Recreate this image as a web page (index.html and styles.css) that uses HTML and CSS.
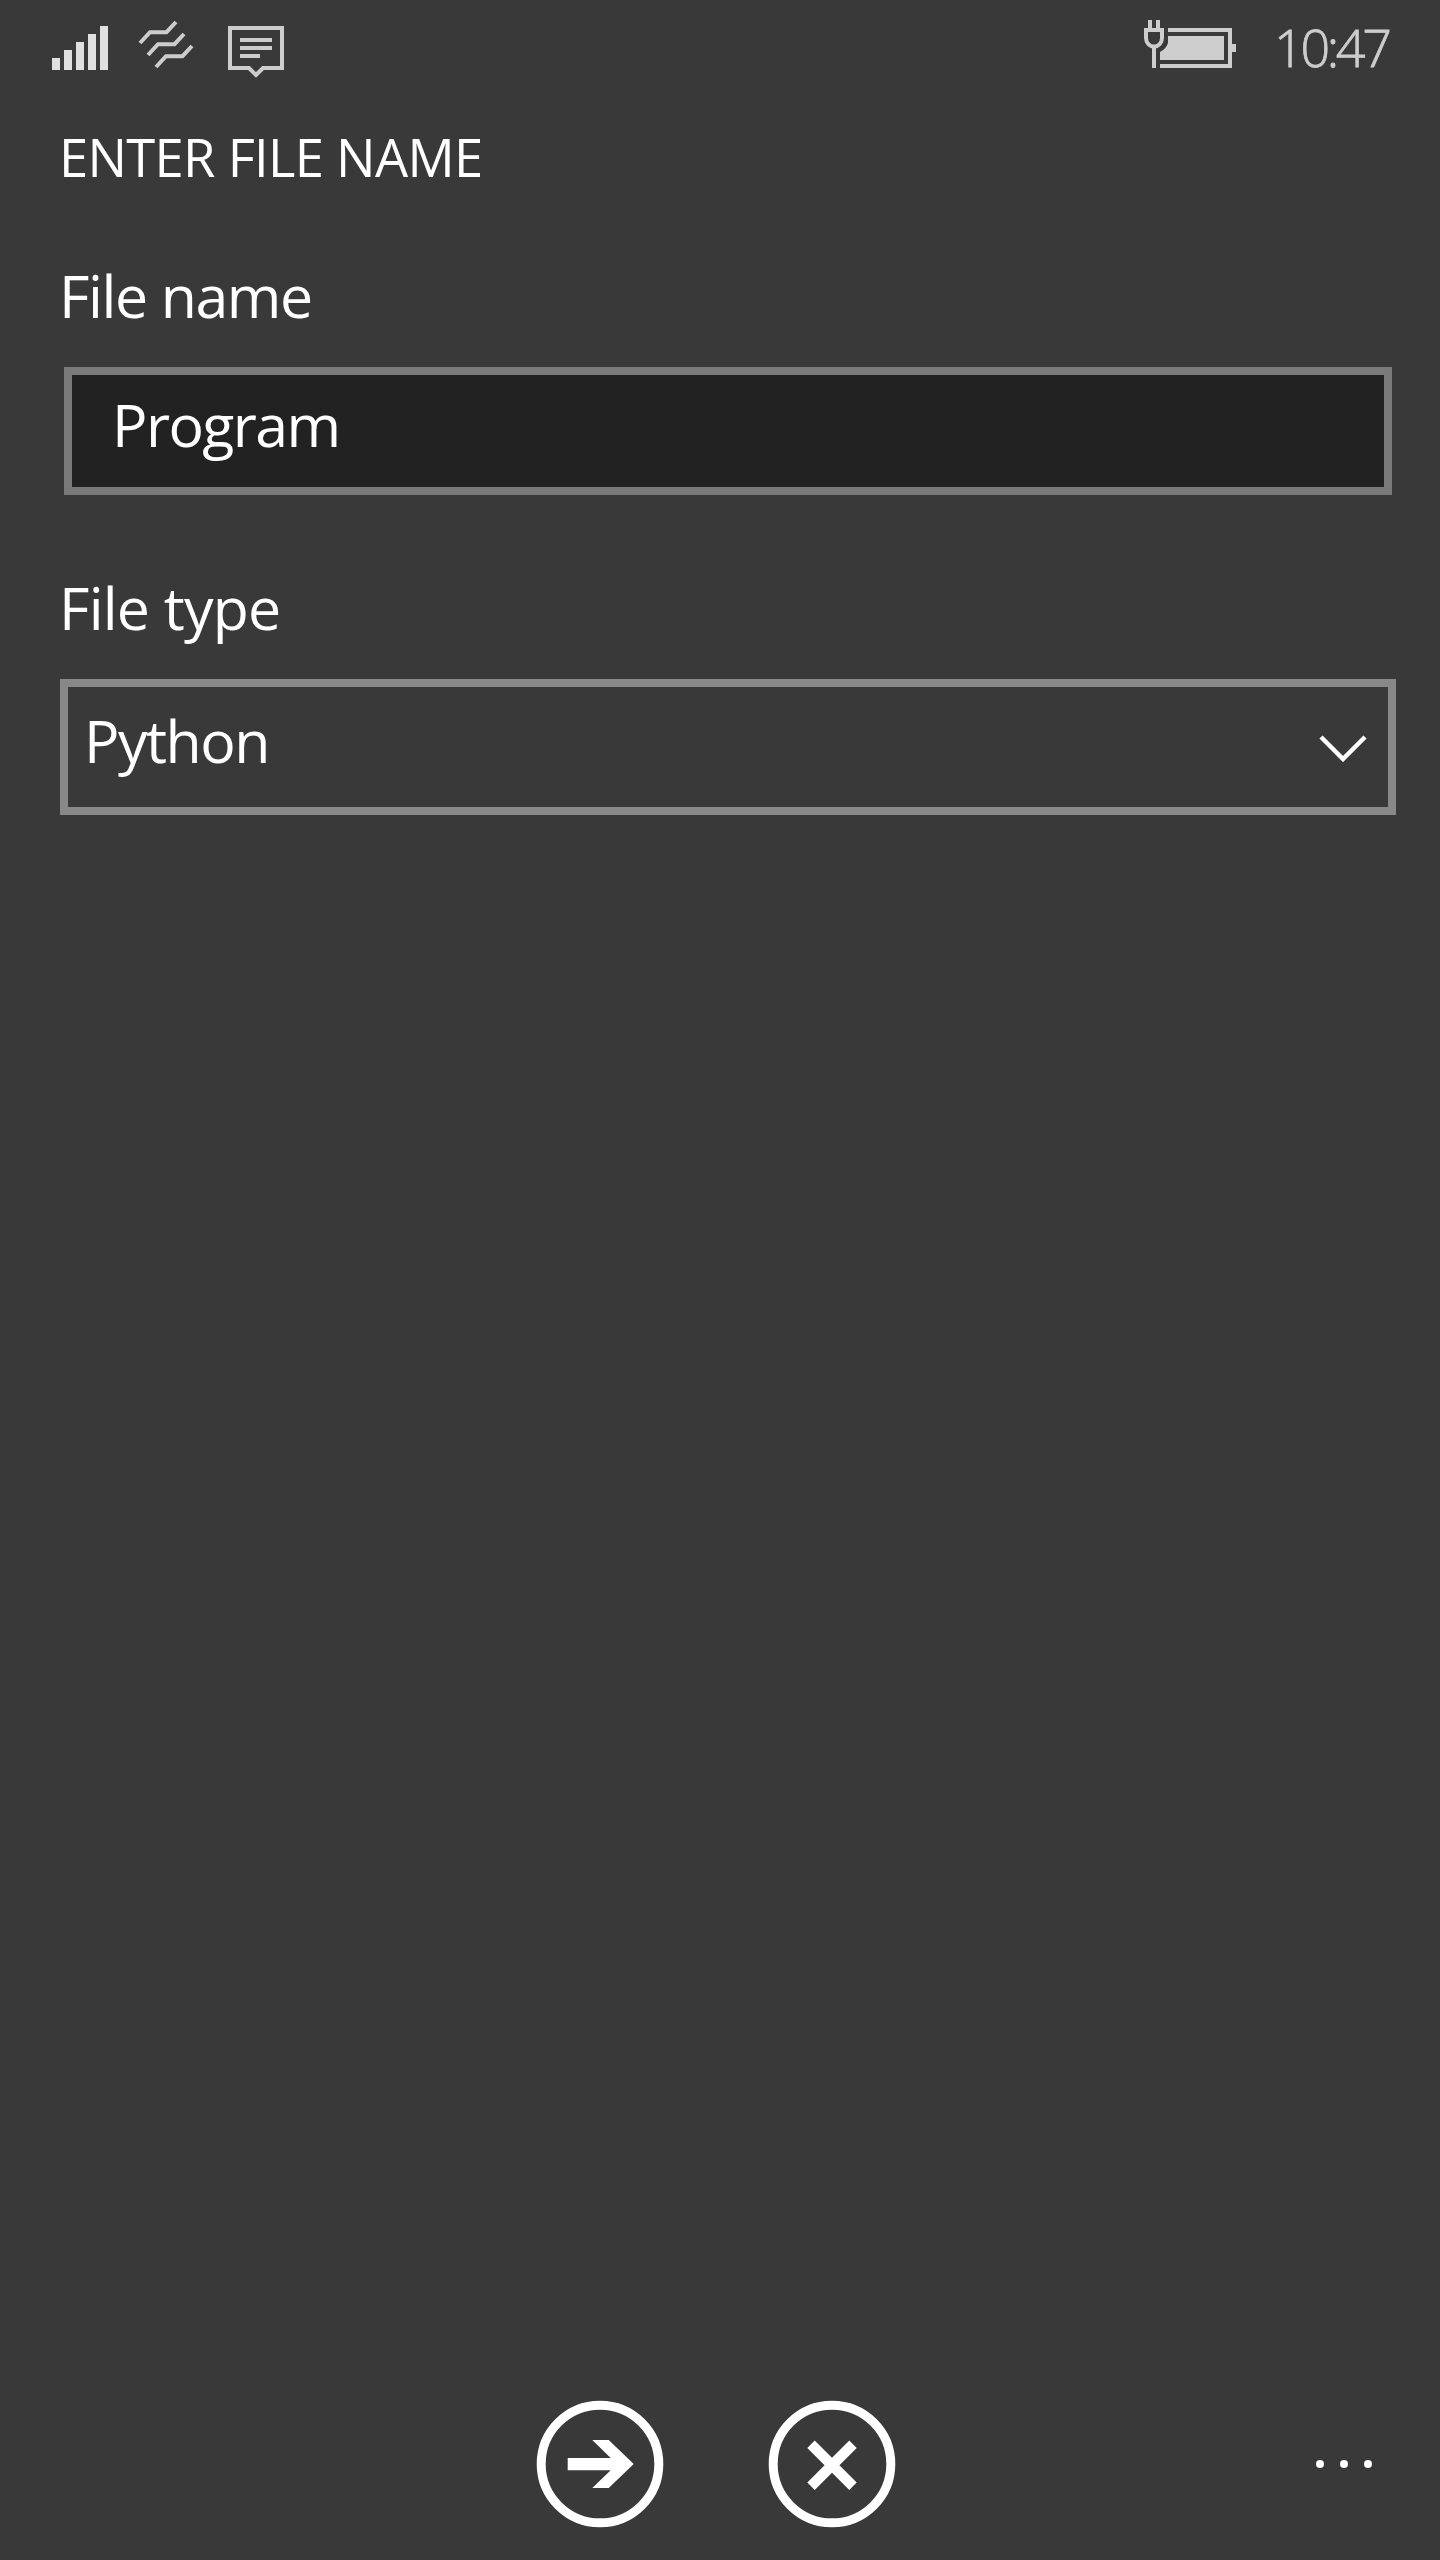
FILE: index.html
```html
<!DOCTYPE html>
<html lang="en">
<head>
<meta charset="utf-8">
<title>Enter file name</title>
<link rel="stylesheet" href="styles.css">
</head>
<body>
<div class="screen">
  <header class="status-bar">
    <div class="status-left">
      <svg class="icon" width="56" height="44" viewBox="0 0 56 44" fill="#e0e0e0"><path d="M0 32h8v12H0zM12 24h8v20h-8zM24 16h8v28h-8zM36 8h8v36h-8zM48 0h8v44h-8z"/></svg>
      <svg class="icon icon-vibrate" width="56" height="52" viewBox="0 0 56 52" fill="none" stroke="#cdcdcd" stroke-width="4"><path d="M2 23 12 12.200H28.500L38 2M10 35 20 24.200H36.500L46 14M18 47 28 36.200H44.500L54 26"/></svg>
      <svg class="icon" width="56" height="52" viewBox="0 0 56 52" fill="none" stroke="#cdcdcd" stroke-width="4"><path d="M2 2H54V42H35L28 49 21 42H2ZM12 14H44M12 22H44M12 30H32"/></svg>
    </div>
    <div class="status-right">
      <svg class="icon icon-battery" width="92" height="48" viewBox="0 0 92 48"><path fill="#cdcdcd" d="M4 0h4v8H4zM12 0h4v8h-4zM8 28h4v20H8zM24 8H88V24h4v8h-4V48H16v-4H84V12H24zM24 16H80V40H16V32Q22 29 24 23z"/><path fill="none" stroke="#cdcdcd" stroke-width="4" d="M2 10H18V18a8 8.500 0 0 1-16 0Z"/></svg>
      <span class="clock">10:47</span>
    </div>
  </header>
  <main class="form">
    <h1 class="title">ENTER FILE NAME</h1>
    <label class="label label-name">File name</label>
    <div class="text-input"><span class="value value-name">Program</span></div>
    <label class="label label-type">File type</label>
    <div class="select">
      <span class="value value-type">Python</span>
      <svg class="chevron" width="48" height="28" viewBox="0 0 48 28" fill="none" stroke="#fff" stroke-width="4.500"><path d="M2 3 24 25 46 3"/></svg>
    </div>
  </main>
  <footer class="app-bar">
    <svg class="action" width="128" height="128" viewBox="-64 -64 128 128"><circle r="58.800" fill="none" stroke="#fff" stroke-width="9"/><path fill="#fff" d="M-32.300-6H10.700L-7.700-24H8.700L33.700 0 8.700 24H-7.700L10.700 6.300H-32.300Z"/></svg>
    <svg class="action" width="128" height="128" viewBox="-64 -64 128 128" fill="none" stroke="#fff"><circle r="58.800" stroke-width="9"/><path stroke-width="10.500" d="M-21-19.700 21 22.300M21-19.700-21 22.300"/></svg>
    <svg class="more" width="56" height="8" viewBox="0 0 56 8" fill="#fff"><circle cx="4" cy="4" r="4"/><circle cx="28" cy="4" r="4"/><circle cx="52" cy="4" r="4"/></svg>
  </footer>
</div>
</body>
</html>
```
FILE: styles.css
```css
body {
  margin: 0;
  background: #393939;
  color: #fff;
  font-family: "Open Sans", "Noto Sans", sans-serif;
}

.screen {
  display: flex;
  flex-direction: column;
  width: 1440px;
  height: 2560px;
  overflow: hidden;
}

svg {
  display: block;
  flex: none;
}

.status-bar {
  display: flex;
  justify-content: space-between;
  height: 121px;
  padding: 0 48px 0 52px;
  box-sizing: border-box;
}

.status-left {
  display: flex;
  align-items: flex-start;
  gap: 32px;
  padding-top: 26px;
}

.icon-vibrate {
  margin-top: -6px;
  margin-left: -2px;
  margin-right: 2px;
}

.status-right {
  display: flex;
  align-items: flex-start;
}

.icon-battery {
  margin-top: 20px;
}

.clock {
  width: 118px;
  margin-left: 38px;
  margin-top: 11px;
  font-size: 52px;
  font-weight: 300;
  line-height: 72px;
  letter-spacing: -3.3px;
  white-space: nowrap;
  color: #cdcdcd;
  -webkit-text-stroke: 0.8px #cdcdcd;
}

.form {
  display: flex;
  flex-direction: column;
  flex: 1;
  padding: 0 44px 0 60px;
}

.title {
  margin: 0 0 62px -1px;
  font-size: 52.5px;
  font-weight: 400;
  line-height: 72px;
  letter-spacing: -0.7px;
}

.label {
  margin-left: -1px;
  font-size: 59px;
  line-height: 80px;
}

.label-name {
  letter-spacing: -1.4px;
}

.label-type {
  letter-spacing: -0.8px;
}

.text-input {
  height: 103px;
  margin: 32px 4px 72px;
  padding: 9px 40px 0;
  border: 8px solid #7a7a7a;
  background: #222;
}

.value {
  font-size: 59px;
  line-height: 80px;
}

.value-name {
  letter-spacing: -1.6px;
}

.value-type {
  letter-spacing: -1.5px;
}

.select {
  display: flex;
  justify-content: space-between;
  height: 107px;
  margin-top: 32px;
  padding: 13px 21px 0 16px;
  border: 8px solid #888;
}

.chevron {
  margin-top: 34px;
}

.app-bar {
  display: flex;
  align-items: center;
  gap: 104px;
  height: 192px;
  padding: 0 68px 0 536px;
}

.more {
  margin-left: auto;
}
```
